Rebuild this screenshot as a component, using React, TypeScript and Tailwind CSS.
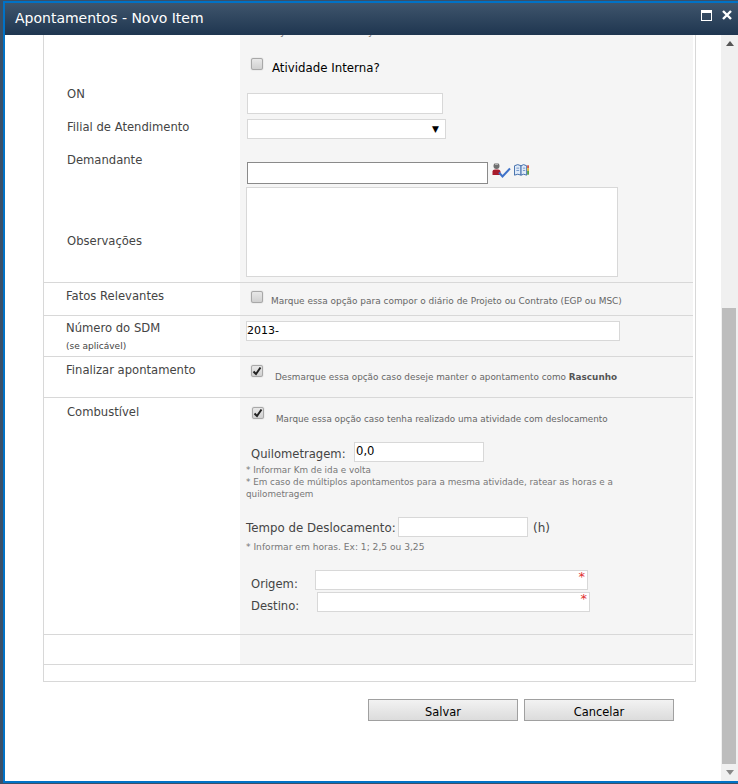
function CheckBox({ checked }: { checked?: boolean }) {
  return (
    <span className="flex h-[12px] w-[12px] shrink-0 items-center justify-center rounded-[2px] border border-[#a8a8a8] bg-linear-to-b from-[#e8e8e8] to-[#d0d0d0] shadow-[0_0_1px_#999]">
      {checked && (
        <svg width="10" height="10" viewBox="0 0 10 10">
          <path d="M1.5 5.5 L4 8 L8.5 1.5" fill="none" stroke="#222" strokeWidth="2" />
        </svg>
      )}
    </span>
  );
}

function Field({ className, children }: { className: string; children?: React.ReactNode }) {
  return <div className={"border border-[#d8d8d8] bg-white " + className}>{children}</div>;
}

function PeopleCheckIcon() {
  return (
    <svg width="19" height="16" viewBox="0 0 19 16">
      <circle cx="4.5" cy="4" r="3" fill="#707070" />
      <rect x="3" y="1" width="3" height="2" fill="#b0b0b0" />
      <path d="M0.5 13 V9.5 Q0.5 7.5 3 7.5 H6 Q8.5 7.5 8.5 10 V13 Z" fill="#a81c2c" />
      <path d="M7 10.5 L10.5 14.5 L18 6.5" fill="none" stroke="#3f72c9" strokeWidth="2" />
    </svg>
  );
}

function BookIcon() {
  return (
    <svg width="15" height="14" viewBox="0 0 16 14">
      <path d="M0.5 2.5 Q4 0 7.5 2.5 V12.5 Q4 10.5 0.5 12.5 Z" fill="#dfeaf8" stroke="#3d6aa8" />
      <path d="M7.5 2.5 Q10 0 13.5 2.5 V12.5 Q10 10.5 7.5 12.5 Z" fill="#dfeaf8" stroke="#3d6aa8" />
      <path d="M2.5 5 H5.5 M2.5 7.5 H5.5 M9.5 5 H12 M9.5 7.5 H12" stroke="#6f94c8" />
      <rect x="14" y="2" width="2" height="3" fill="#d0574a" />
      <rect x="14" y="5" width="2" height="3" fill="#e0b83a" />
      <rect x="14" y="8" width="2" height="4" fill="#5aa04a" />
    </svg>
  );
}

function Required() {
  return <span className="absolute right-[2px] top-[-1px] text-[13px] leading-[14px] text-[#e03030]">*</span>;
}

export default function App() {
  return (
    <div className="h-[784px] w-[738px] overflow-hidden bg-[#3a5068] pb-px pl-[3px] pt-px font-['DejaVu_Sans',sans-serif] text-[11.6px] text-[#444]">
      <div className="flex h-[782px] flex-col border-b-2 border-l-2 border-t-2 border-[#0072c6] bg-white">
        <header className="flex h-[32px] shrink-0 items-center justify-between bg-linear-to-b from-[#3f556c] to-[#1f3650] pl-[10px] pr-[6px]">
          <span className="pb-[2px] text-[14px] text-white">Apontamentos - Novo Item</span>
          <div className="flex items-center gap-[10px] pb-[8px]">
            <span className="h-[11px] w-[11px] border border-t-[3px] border-white bg-transparent" />
            <svg width="10" height="10" viewBox="0 0 10 10">
              <path d="M1 1 L9 9 M9 1 L1 9" stroke="#fff" strokeWidth="2.4" />
            </svg>
          </div>
        </header>

        <div className="flex min-h-0 flex-1">
          <main className="min-w-0 flex-1 overflow-hidden pl-[38px]">
            <div className="w-[653px] border-b border-l border-r border-[#d8d8d8] pr-[2px]">
              {/* clipped block: ON, Filial, Demandante, Observacoes */}
              <section className="flex h-[248px] border-b border-[#d8d8d8]">
                <div className="w-[196px] shrink-0 pl-[23px]">
                  <p className="mt-[51px] leading-[16px]">ON</p>
                  <p className="mt-[17px] leading-[16px]">Filial de Atendimento</p>
                  <p className="mt-[17px] leading-[16px]">Demandante</p>
                  <p className="mt-[65px] leading-[16px]">Observações</p>
                </div>
                <div className="flex-1 bg-[#f5f5f5] pl-[6px]">
                  <div className="flex h-[16px] -translate-y-[11px] items-center text-[10px] leading-none text-[#777]">
                    <span className="ml-[34px] w-[88px]">y</span>
                    <span>y</span>
                  </div>
                  <div className="mt-[7px] flex h-[18px] items-start pl-[5px]">
                    <CheckBox />
                    <span className="ml-[9px] pt-px text-[11.8px] leading-[18px] text-black">Atividade Interna?</span>
                  </div>
                  <Field className="ml-px mt-[17px] h-[21px] w-[196px]" />
                  <Field className="ml-px mt-[5px] flex h-[20px] w-[199px] items-center justify-end pr-[6px]">
                    <span className="text-[9px] leading-none text-black">▼</span>
                  </Field>
                  <div className="ml-px mt-[23px] flex items-center">
                    <div className="h-[22px] w-[241px] border border-[#8a8a8a] bg-white" />
                    <div className="ml-[4px] flex -translate-y-[3px] items-center gap-[3px]">
                      <PeopleCheckIcon />
                      <BookIcon />
                    </div>
                  </div>
                  <Field className="mt-[3px] h-[90px] w-[372px]" />
                </div>
              </section>

              <section className="flex h-[33px] border-b border-[#d8d8d8]">
                <div className="w-[196px] shrink-0 pl-[22px] pt-[5px] leading-[16px]">Fatos Relevantes</div>
                <div className="flex flex-1 bg-[#f5f5f5] pl-[11px] pt-[8px]">
                  <CheckBox />
                  <span className="ml-[8px] mt-[3px] text-[8.95px] leading-[14px] text-[#666]">
                    Marque essa opção para compor o diário de Projeto ou Contrato (EGP ou MSC)
                  </span>
                </div>
              </section>

              <section className="flex h-[41px] border-b border-[#d8d8d8]">
                <div className="w-[196px] shrink-0 pl-[22px] pt-[4px]">
                  <p className="leading-[16px]">Número do SDM</p>
                  <p className="mt-[3px] text-[9px] leading-[14px]">(se aplicável)</p>
                </div>
                <div className="flex-1 bg-[#f5f5f5] pl-[6px] pt-[5px]">
                  <Field className="flex h-[20px] w-[374px] items-center text-[11px] text-black">2013-</Field>
                </div>
              </section>

              <section className="flex h-[41px] border-b border-[#d8d8d8]">
                <div className="w-[196px] shrink-0 pl-[22px] pt-[5px] leading-[16px]">Finalizar apontamento</div>
                <div className="flex flex-1 bg-[#f5f5f5] pl-[11px] pt-[8px]">
                  <CheckBox checked />
                  <span className="ml-[12px] mt-[5px] text-[8.85px] leading-[14px] text-[#666]">
                    Desmarque essa opção caso deseje manter o apontamento como <b className="text-[#555]">Rascunho</b>
                  </span>
                </div>
              </section>

              <section className="flex h-[237px] border-b border-[#d8d8d8]">
                <div className="w-[196px] shrink-0 pl-[23px] pt-[6px] leading-[16px]">Combustível</div>
                <div className="flex-1 bg-[#f5f5f5] pl-[6px]">
                  <div className="flex pl-[6px] pt-[9px]">
                    <CheckBox checked />
                    <span className="ml-[12px] mt-[5px] text-[8.8px] leading-[14px] text-[#666]">
                      Marque essa opção caso tenha realizado uma atividade com deslocamento
                    </span>
                  </div>
                  <div className="mt-[14px] flex items-center pl-[5px]">
                    <span className="w-[103px] pt-[6px]">Quilometragem:</span>
                    <Field className="flex h-[20px] w-[130px] items-center pl-[1px] text-black">0,0</Field>
                  </div>
                  <p className="mt-[1px] w-[372px] text-[8.8px] leading-[12px] text-[#777]">
                    * Informar Km de ida e volta
                    <br />* Em caso de múltiplos apontamentos para a mesma atividade, ratear as horas e a quilometragem
                  </p>
                  <div className="mt-[16px] flex items-center">
                    <span className="w-[152px] whitespace-nowrap pt-[3px] text-[11.8px]">Tempo de Deslocamento:</span>
                    <Field className="h-[20px] w-[130px]" />
                    <span className="ml-[5px] pt-[3px] text-[12px]">(h)</span>
                  </div>
                  <p className="mt-[3px] text-[9.1px] leading-[14px] text-[#777]">* Informar em horas. Ex: 1; 2,5 ou 3,25</p>
                  <div className="mt-[16px] flex h-[21px] items-start pl-[5px]">
                    <span className="w-[64px] pt-[6px]">Origem:</span>
                    <Field className="relative h-[20px] w-[273px]">
                      <Required />
                    </Field>
                  </div>
                  <div className="mt-px flex h-[21px] items-start pl-[5px]">
                    <span className="w-[66px] pt-[6px]">Destino:</span>
                    <Field className="relative h-[20px] w-[273px]">
                      <Required />
                    </Field>
                  </div>
                </div>
              </section>

              <section className="flex h-[30px] border-b border-[#d8d8d8]">
                <div className="w-[196px] shrink-0" />
                <div className="flex-1 bg-[#f5f5f5]" />
              </section>

              <div className="h-[16px]" />
            </div>

            <div className="mt-[17px] flex w-[631px] justify-end gap-[6px]">
              <button className="h-[22px] w-[150px] border border-[#a0a0a0] bg-linear-to-b from-[#f2f2f2] to-[#dcdcdc] pt-[4px] text-[11.4px] text-black">
                Salvar
              </button>
              <button className="h-[22px] w-[150px] border border-[#a0a0a0] bg-linear-to-b from-[#f2f2f2] to-[#dcdcdc] pt-[4px] text-[11.4px] text-black">
                Cancelar
              </button>
            </div>
          </main>

          <aside className="flex w-[17px] shrink-0 flex-col bg-[#f0f0f0]">
            <div className="flex h-[17px] shrink-0 items-center justify-center">
              <span className="h-0 w-0 border-x-[4px] border-b-[5px] border-x-transparent border-b-[#555]" />
            </div>
            <div className="ml-px mt-[256px] h-[456px] w-[14px] shrink-0 bg-[#bdbdbd]" />
            <div className="flex flex-1 items-center justify-center">
              <span className="h-0 w-0 border-x-[4px] border-t-[5px] border-x-transparent border-t-[#888]" />
            </div>
          </aside>
        </div>
      </div>
    </div>
  );
}
